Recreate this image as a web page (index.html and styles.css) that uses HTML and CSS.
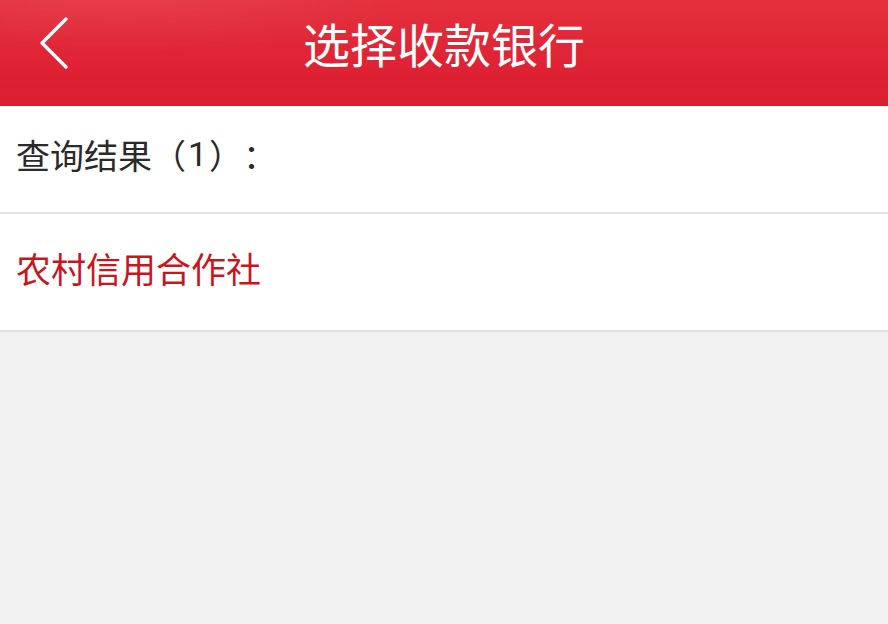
FILE: index.html
```html
<!DOCTYPE html>
<html lang="zh">
<head>
<meta charset="utf-8">
<link rel="stylesheet" href="styles.css">
</head>
<body>
<header class="topbar">
  <span class="back">
    <svg width="32" height="54" viewBox="0 0 32 54"><path d="M28 3 L4 27 L28 51" fill="none" stroke="#fff" stroke-width="3.4" stroke-linecap="round" stroke-linejoin="round"/></svg>
  </span>
  <h1 class="title">选择收款银行</h1>
</header>
<div class="result-head">查询结果（<span class="num">1</span>）：</div>
<div class="bank-item">农村信用合作社</div>
</body>
</html>
```
FILE: styles.css
```css
html, body {
  margin: 0;
  padding: 0;
  background: #f2f2f2;
  font-family: "Noto Sans CJK SC", "Noto Sans", sans-serif;
  text-spacing-trim: space-all;
}
.topbar {
  height: 106px;
  background:
    radial-gradient(ellipse 420px 90px at 120px -10px, rgba(255,255,255,0.08), rgba(255,255,255,0) 70%),
    linear-gradient(180deg, #e4303d 0%, #df2334 60%, #da1e30 100%);
  display: flex;
  align-items: center;
  justify-content: center;
  position: relative;
}
.back {
  position: absolute;
  left: 38px;
  top: 16px;
  display: block;
}
.back svg { display: block; }
.title {
  margin: 0 0 22px 0;
  color: #fff;
  font-size: 47px;
  font-weight: 400;
}
.result-head {
  height: 108px;
  box-sizing: border-box;
  padding: 0 0 10px 16px;
  background: #fff;
  display: flex;
  align-items: center;
  font-size: 34px;
  color: #2a2a2a;
  border-bottom: 2px solid #e2e2e2;
  white-space: pre;
}
.num {
  font-family: Roboto, "Noto Sans", sans-serif;
  padding: 0 2px;
}
.bank-item {
  height: 118px;
  box-sizing: border-box;
  padding: 0 0 10px 16px;
  background: #fff;
  display: flex;
  align-items: center;
  font-size: 35px;
  color: #c9151e;
  border-bottom: 2px solid #e2e2e2;
}
```
